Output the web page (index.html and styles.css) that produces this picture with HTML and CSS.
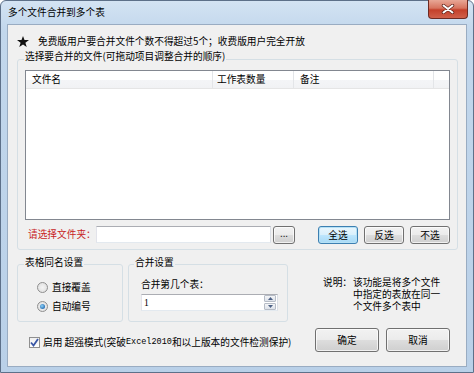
FILE: index.html
```html
<!DOCTYPE html>
<html lang="zh-CN">
<head>
    <meta charset="UTF-8">
    <title>多个文件合并到多个表</title>
    <link rel="stylesheet" href="styles.css">
</head>
<body>
    <div class="window">
        <div class="titlebar">
            <span class="title">多个文件合并到多个表</span>
            <div class="close">
                <svg width="14" height="10" viewBox="0 0 14 10">
                    <path d="M2.5 1.5 L11.5 8.5 M11.5 1.5 L2.5 8.5" stroke="#5a2018" stroke-width="3.4" stroke-linecap="round"/>
                    <path d="M2.5 1.5 L11.5 8.5 M11.5 1.5 L2.5 8.5" stroke="#fff" stroke-width="2" stroke-linecap="round"/>
                </svg>
            </div>
        </div>
        <div class="client">
            <div class="notice">
                <svg class="star" width="12" height="11" viewBox="0 0 12 11">
                    <path d="M6 0 L7.5 4 L12 4.1 L8.4 6.7 L9.7 11 L6 8.4 L2.3 11 L3.6 6.7 L0 4.1 L4.5 4 Z" fill="#111"/>
                </svg>
                <span>免费版用户要合并文件个数不得超过5个；收费版用户完全开放</span>
            </div>

            <fieldset class="group group-files">
                <legend>选择要合并的文件(可拖动项目调整合并的顺序)</legend>
                <div class="listview">
                    <div class="lv-head">
                        <span class="col col-name">文件名</span>
                        <span class="col col-count">工作表数量</span>
                        <span class="col col-note">备注</span>
                        <span class="col col-rest"></span>
                    </div>
                </div>
                <div class="folder-row">
                    <span class="folder-label">请选择文件夹：</span>
                    <input type="text" class="textbox folder-input">
                    <button class="btn btn-browse">...</button>
                    <div class="select-btns">
                        <button class="btn btn-small btn-default">全选</button>
                        <button class="btn btn-small">反选</button>
                        <button class="btn btn-small">不选</button>
                    </div>
                </div>
            </fieldset>

            <div class="options-row">
                <fieldset class="group group-same">
                    <legend>表格同名设置</legend>
                    <label class="radio-row"><span class="radio"></span>直接覆盖</label>
                    <label class="radio-row"><span class="radio checked"></span>自动编号</label>
                </fieldset>
                <fieldset class="group group-merge">
                    <legend>合并设置</legend>
                    <div class="merge-label">合并第几个表：</div>
                    <div class="spin">
                        <span class="spin-value">1</span>
                        <div class="spin-btns">
                            <span class="spin-btn"><svg width="5" height="3" viewBox="0 0 5 3"><path d="M0 3 L2.5 0 L5 3 Z" fill="#4d6185"/></svg></span>
                            <span class="spin-btn"><svg width="5" height="3" viewBox="0 0 5 3"><path d="M0 0 L2.5 3 L5 0 Z" fill="#4d6185"/></svg></span>
                        </div>
                    </div>
                </fieldset>
                <div class="note">
                    <span class="note-head">说明：</span>
                    <span class="note-text">该功能是将多个文件中指定的表放在同一个文件多个表中</span>
                </div>
            </div>

            <div class="footer-row">
                <label class="check-row">
                    <span class="checkbox">
                        <svg width="9" height="9" viewBox="0 0 9 9"><path d="M1 4.5 L3.5 7.5 L8 1" stroke="#3a57a6" stroke-width="1.8" fill="none"/></svg>
                    </span>
                    启用 超强模式(突破<span class="mono">Excel2010</span>和以上版本的文件检测保护)
                </label>
                <div class="dialog-btns">
                    <button class="btn btn-big">确定</button>
                    <button class="btn btn-big">取消</button>
                </div>
            </div>
        </div>
    </div>
</body>
</html>
```

FILE: styles.css
```css
*{
    margin: 0;
    padding: 0;
    box-sizing: border-box;
}

body {
    width: 474px;
    height: 373px;
    overflow: hidden;
    font-family: "Noto Sans CJK SC", "Liberation Sans", sans-serif;
    font-size: 9.7px;
    line-height: 12px;
    color: #000;
    background: #fff;
}

.window {
    width: 474px;
    height: 373px;
    display: flex;
    flex-direction: column;
    border: 1px solid #5d7089;
    border-radius: 6px 6px 0 0;
    background: linear-gradient(to bottom, #d3e3f3 0, #c2d7ec 30px, #b9d0e8 100%);
}

.titlebar {
    height: 23px;
    display: flex;
    align-items: flex-start;
    padding-left: 7px;
}

.title {
    margin-top: 5px;
}

.close {
    margin-left: auto;
    margin-right: 5px;
    margin-top: -1px;
    width: 40px;
    height: 19px;
    display: flex;
    align-items: center;
    justify-content: center;
    border: 1px solid #6d2a22;
    border-top: none;
    border-radius: 0 0 4px 4px;
    background: linear-gradient(to bottom, #e8a796 0, #d7745f 45%, #c4402a 55%, #d0604a 100%);
}

.client {
    flex: 1;
    margin: 0 6px 5px 6px;
    border: 1px solid #99acc2;
    background: #f0f0f0;
    padding: 10px 8px 0 9px;
}

.notice {
    display: flex;
    align-items: center;
    height: 12px;
}

.star {
    margin-right: 9px;
}

/* group boxes */
.group {
    border: 1px solid #d5dfe5;
    border-radius: 3px;
    margin: 0;
    min-width: 0;
}

.group legend {
    margin-left: -1px;
    padding: 0 1px 6px 1px;
    line-height: 12px;
}

.group-files {
    margin-top: 3px;
    padding: 2px 7px 5px 7px;
}

.listview {
    height: 150px;
    border: 1px solid #828790;
    background: #fff;
}

.lv-head {
    display: flex;
    height: 18px;
    border-bottom: 1px solid #e5e5e5;
    background: linear-gradient(to bottom, #ffffff 0, #ffffff 50%, #f4f5f7 51%, #f1f2f4 100%);
}

.col {
    height: 17px;
    line-height: 17px;
    border-right: 1px solid #e3e5e8;
    padding-left: 6px;
}

.col-name { width: 187px; }
.col-count { width: 81px; padding-left: 4px; }
.col-note { width: 140px; }
.col-rest { flex: 1; border-right: none; }

.folder-row {
    display: flex;
    align-items: flex-start;
    height: 18px;
    margin-top: 6px;
}

.folder-label {
    color: #c81e1e;
    margin-left: 3px;
    width: 68px;
    white-space: nowrap;
    line-height: 17px;
}

.textbox {
    border: 1px solid #abadb3;
    border-left-color: #e2e3ea;
    border-right-color: #dbdfe6;
    border-bottom-color: #e3e9ef;
    background: #fff;
    outline: none;
}

.folder-input {
    width: 175px;
    height: 17px;
}

.btn {
    font-family: "Noto Sans CJK SC", "Liberation Sans", sans-serif;
    font-size: 9.7px;
    color: #000;
    border: 1px solid #707070;
    border-radius: 3px;
    background: linear-gradient(to bottom, #f2f2f2 0, #ebebeb 50%, #dddddd 51%, #cfcfcf 100%);
    box-shadow: inset 0 0 0 1px rgba(255, 255, 255, 0.7);
}

.btn-browse {
    width: 22px;
    height: 18px;
    margin-left: 2px;
    line-height: 10px;
    padding-bottom: 4px;
}

.select-btns {
    display: flex;
    gap: 6px;
    margin-left: auto;
}

.btn-small {
    width: 40px;
    height: 18px;
}

.btn-default {
    border-color: #3c7fb1;
    box-shadow: inset 0 0 0 1px #b5e1f6;
    background: linear-gradient(to bottom, #eaf6fd 0, #d9f0fc 50%, #bee6fd 51%, #a7d9f5 100%);
}

/* options */
.options-row {
    display: flex;
    margin-top: 6px;
}

.group-same {
    width: 106px;
    height: 66px;
    padding: 9px 4px 0 19px;
}

.group-same legend {
    padding-bottom: 4px;
    margin-left: -13px;
}

.radio-row {
    display: flex;
    align-items: center;
    height: 12px;
    margin-bottom: 7px;
}

.radio {
    width: 11px;
    height: 11px;
    border-radius: 50%;
    border: 1px solid #8f8f8f;
    background: radial-gradient(circle, #f4f4f4 0, #dcdcdc 100%);
    margin-right: 4px;
    display: flex;
    align-items: center;
    justify-content: center;
}

.radio.checked::after {
    content: "";
    width: 5px;
    height: 5px;
    border-radius: 50%;
    background: radial-gradient(circle at 40% 40%, #8fd3f7 0, #2b72b7 70%, #1b4f86 100%);
}

.group-merge {
    width: 160px;
    height: 66px;
    margin-left: 5px;
    padding: 6px 9px 0 12px;
}

.group-merge legend {
    padding-bottom: 4px;
    margin-left: -7px;
}

.merge-label {
    height: 12px;
}

.spin {
    display: flex;
    align-items: center;
    margin-top: 4px;
    height: 17px;
    border: 1px solid #abadb3;
    border-bottom-color: #e3e9ef;
    border-left-color: #e2e3ea;
    border-right-color: #dbdfe6;
    background: #fff;
    padding: 0 1px 0 2px;
}

.spin-value {
    flex: 1;
    font-family: "Liberation Serif", serif;
}

.spin-btns {
    display: flex;
    flex-direction: column;
    gap: 1px;
}

.spin-btn {
    width: 12px;
    height: 7px;
    display: flex;
    align-items: center;
    justify-content: center;
    border: 1px solid #b6bcc6;
    border-radius: 1px;
    background: linear-gradient(to bottom, #f4f5f7, #dde2ea);
}

.note {
    display: flex;
    margin-left: 35px;
    margin-top: 20px;
}

.note-head {
    width: 30px;
}

.note-text {
    width: 90px;
}

/* footer */
.footer-row {
    display: flex;
    align-items: center;
    margin-top: 6px;
    height: 24px;
    padding-right: 8px;
}

.check-row {
    display: flex;
    align-items: center;
    margin-left: 12px;
    margin-top: 4px;
}

.checkbox {
    width: 11px;
    height: 11px;
    border: 1px solid #8f8f8f;
    background: linear-gradient(to bottom, #f0f0f0, #ffffff);
    display: flex;
    align-items: center;
    justify-content: center;
    margin-right: 3px;
}

.mono {
    font-family: "Liberation Mono", monospace;
    font-size: 8.5px;
}

.dialog-btns {
    display: flex;
    gap: 7px;
    margin-left: auto;
}

.btn-big {
    width: 64px;
    height: 24px;
}
```
